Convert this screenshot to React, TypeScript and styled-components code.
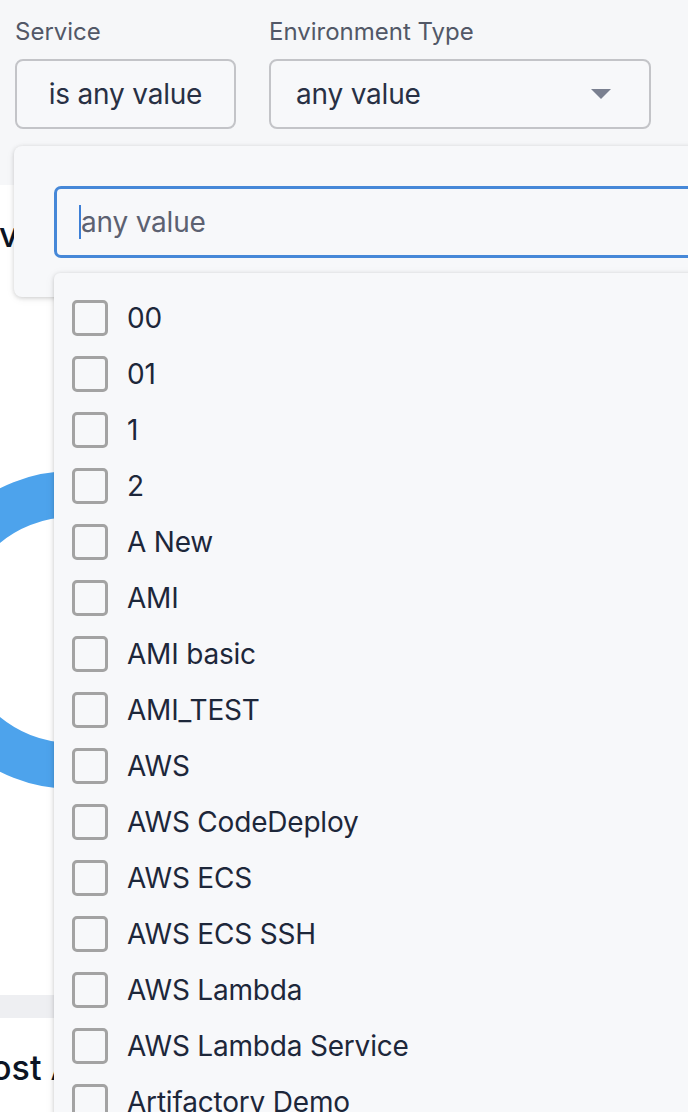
import React from 'react'
import styled, { createGlobalStyle } from 'styled-components'

const GlobalStyle = createGlobalStyle`
    html, body {
        margin: 0;
        padding: 0;
        background: #f6f7f9;
        font-family: Inter, "Noto Sans", sans-serif;
    }
    * {
        box-sizing: border-box;
    }
`

const Page = styled.div`
    position: relative;
    width: 688px;
    height: 1112px;
    overflow: hidden;
    background: #f6f7f9;
`

const FilterBar = styled.div`
    display: flex;
    align-items: flex-start;
    gap: 33px;
    height: 185px;
    padding: 19px 15px 0 15px;
`

const FilterGroup = styled.div`
    display: flex;
    flex-direction: column;
    gap: 14px;
`

const FilterLabel = styled.label`
    font-size: 24px;
    line-height: 26px;
    color: #525867;
`

const FilterBox = styled.div<{ $width: number; $centered?: boolean }>`
    display: flex;
    align-items: center;
    justify-content: ${p => (p.$centered ? 'center' : 'space-between')};
    width: ${p => p.$width}px;
    height: 70px;
    padding: ${p => (p.$centered ? '0' : '0 38px 0 25px')};
    border: 2px solid #c3c4c8;
    border-radius: 8px;
    background: #f7f8fa;
    font-size: 28px;
    color: #283044;
    letter-spacing: -0.2px;
`

const Caret = styled.span`
    width: 0;
    height: 0;
    border-left: 10px solid transparent;
    border-right: 10px solid transparent;
    border-top: 10px solid #7a8090;
`

const Card = styled.section<{ $height: number }>`
    height: ${p => p.$height}px;
    background: #ffffff;
    overflow: hidden;
`

const CardTitle = styled.h2<{ $shift: number }>`
    margin: 0 0 0 ${p => p.$shift}px;
    padding-top: 30px;
    font-size: 34px;
    line-height: 40px;
    font-weight: 500;
    color: #0b1424;
    white-space: nowrap;
`

const ChartWrap = styled.div`
    margin: 216px 0 0 -87px;
    width: 318px;
    height: 318px;
`

const Divider = styled.div`
    height: 23px;
    background: #eeeff2;
`

const Popover = styled.div`
    position: absolute;
    left: 14px;
    top: 146px;
    width: 720px;
    height: 151px;
    padding: 40px 0 0 40px;
    background: #f7f8fa;
    border-radius: 8px;
    box-shadow: 0 1px 4px rgba(0, 0, 0, 0.16), 0 2px 10px rgba(0, 0, 0, 0.06);
`

const SearchBox = styled.div`
    display: flex;
    align-items: center;
    height: 72px;
    padding-left: 22px;
    border: 3px solid #4688d8;
    border-radius: 7px;
    font-size: 28px;
    color: #5c6171;
    letter-spacing: -0.2px;
`

const TextCursor = styled.span`
    width: 2px;
    height: 34px;
    margin-right: 0;
    background: #3d7fd6;
`

const ListPanel = styled.div`
    position: absolute;
    left: 54px;
    top: 273px;
    width: 700px;
    bottom: -20px;
    padding-top: 17px;
    background: #f7f8fa;
    border-radius: 6px 0 0 0;
    box-shadow: 0 1px 4px rgba(0, 0, 0, 0.18), 0 2px 12px rgba(0, 0, 0, 0.06);
`

const OptionRow = styled.div`
    display: flex;
    align-items: center;
    gap: 19px;
    height: 56px;
    padding-left: 18px;
    font-size: 28px;
    color: #1d273a;
    letter-spacing: -0.2px;
    white-space: nowrap;
`

const CheckBox = styled.span`
    flex-shrink: 0;
    width: 36px;
    height: 36px;
    border: 3px solid #a3a3a3;
    border-radius: 5px;
    background: #f7f8fa;
`

const options = [
    '00', '01', '1', '2', 'A New', 'AMI', 'AMI basic', 'AMI_TEST', 'AWS',
    'AWS CodeDeploy', 'AWS ECS', 'AWS ECS SSH', 'AWS Lambda', 'AWS Lambda Service',
    'Artifactory Demo',
]

const Donut = () => {
    // ring centred in a 318 box, R 159 / r 113
    const c = 159
    const r = 136
    const circ = 2 * Math.PI * r
    return (
        <svg width="318" height="318" viewBox="0 0 318 318">
            <circle cx={c} cy={c} r={r} fill="none" stroke="#4da3ec" strokeWidth="46" />
            <circle
                cx={c}
                cy={c}
                r={r}
                fill="none"
                stroke="#e0607a"
                strokeWidth="46"
                strokeDasharray={`${circ * 0.006} ${circ}`}
                transform={`rotate(-94 ${c} ${c})`}
            />
        </svg>
    )
}

const App: React.FC = () => {
    return (
        <>
            <GlobalStyle />
            <Page>
                <FilterBar>
                    <FilterGroup>
                        <FilterLabel>Service</FilterLabel>
                        <FilterBox $width={221} $centered>is any value</FilterBox>
                    </FilterGroup>
                    <FilterGroup>
                        <FilterLabel>Environment Type</FilterLabel>
                        <FilterBox $width={382}>
                            any value
                            <Caret />
                        </FilterBox>
                    </FilterGroup>
                </FilterBar>

                <Card $height={810}>
                    <CardTitle $shift={-27}>Overview</CardTitle>
                    <ChartWrap>
                        <Donut />
                    </ChartWrap>
                </Card>
                <Divider />
                <Card $height={120}>
                    <CardTitle $shift={-40}>Most Active Services</CardTitle>
                </Card>

                <Popover>
                    <SearchBox>
                        <TextCursor />
                        any value
                    </SearchBox>
                </Popover>

                <ListPanel>
                    {options.map(o => (
                        <OptionRow key={o}>
                            <CheckBox />
                            {o}
                        </OptionRow>
                    ))}
                </ListPanel>
            </Page>
        </>
    )
}

export default App
